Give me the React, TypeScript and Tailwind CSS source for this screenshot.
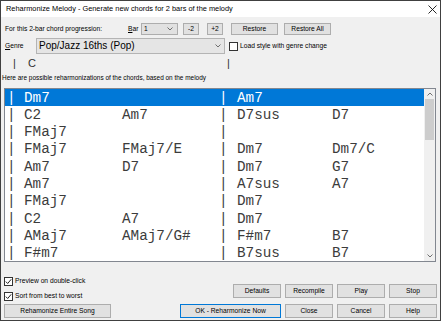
import React from "react";

const ui = "font-['Liberation_Sans',Arial,sans-serif] text-[6.7px] leading-none text-black";
const mono = "font-['Liberation_Mono','Courier_New',monospace] text-[14.3px] leading-none";

type Row = [string, string, string, string];

const rows: Row[] = [
  ["Dm7", "", "Am7", ""],
  ["C2", "Am7", "D7sus", "D7"],
  ["FMaj7", "", "", ""],
  ["FMaj7", "FMaj7/E", "Dm7", "Dm7/C"],
  ["Am7", "D7", "Dm7", "G7"],
  ["Am7", "", "A7sus", "A7"],
  ["FMaj7", "", "Dm7", ""],
  ["C2", "A7", "Dm7", ""],
  ["AMaj7", "AMaj7/G#", "F#m7", "B7"],
  ["F#m7", "", "B7sus", "B7"],
];

function Chevron({ up }: { up?: boolean }) {
  return (
    <svg width="6" height="4" viewBox="0 0 6 4">
      <path d={up ? "M0.5 3.5 L3 1 L5.5 3.5" : "M0.5 0.5 L3 3 L5.5 0.5"} stroke="#606060" strokeWidth="0.9" fill="none" />
    </svg>
  );
}

function Btn({ className, children }: { className: string; children: React.ReactNode }) {
  return (
    <div className={`flex items-center justify-center border bg-[#e1e1e1] ${ui} ${className}`}>
      {children}
    </div>
  );
}

function Check({ checked }: { checked?: boolean }) {
  return (
    <div className="w-[9px] h-[9px] border border-[#333] bg-white flex items-center justify-center shrink-0">
      {checked && (
        <svg width="7" height="7" viewBox="0 0 7 7">
          <path d="M0.8 3.6 L2.7 5.5 L6.2 1.3" stroke="#222" strokeWidth="1" fill="none" />
        </svg>
      )}
    </div>
  );
}

export default function App() {
  return (
    <div className="w-[441px] h-[321px] border border-[#404040] bg-[#f0f0f0] flex flex-col overflow-hidden">
      {/* title bar */}
      <div className="h-[16px] bg-white flex items-center justify-between pl-[5px] pr-[3px]">
        <span className="font-['Liberation_Sans',Arial,sans-serif] text-[7.4px] leading-none text-black">
          Reharmonize Melody - Generate new chords for 2 bars of the melody
        </span>
        <svg width="9" height="9" viewBox="0 0 9 9">
          <path d="M0.5 0.5 L8.5 8.5 M8.5 0.5 L0.5 8.5" stroke="#111" strokeWidth="0.9" />
        </svg>
      </div>

      {/* bar row */}
      <div className="mt-[6px] h-[12px] flex items-center pl-[4px]">
        <span className={`${ui} w-[123px]`}>For this 2-bar chord progression:</span>
        <span className={`${ui} w-[13px]`}>
          <u>B</u>ar
        </span>
        <div className="w-[37px] h-[12px] border border-[#adadad] bg-[#e1e1e1] flex items-center justify-between pl-[2px] pr-[4px]">
          <span className={ui}>1</span>
          <Chevron />
        </div>
        <Btn className="ml-[5px] w-[16px] h-[12px] border-[#adadad]">-2</Btn>
        <Btn className="ml-[8px] w-[16px] h-[12px] border-[#adadad]">+2</Btn>
        <Btn className="ml-[8px] w-[47px] h-[12px] border-[#adadad]">Restore</Btn>
        <Btn className="ml-[6px] w-[47px] h-[12px] border-[#adadad]">Restore All</Btn>
      </div>

      {/* genre row */}
      <div className="mt-[3px] h-[16px] flex items-center pl-[4px]">
        <span className={`${ui} w-[31px]`}>
          <u>G</u>enre
        </span>
        <div className="w-[189px] h-[16px] border border-[#b4b4b4] bg-[#e5e5e5] flex items-center justify-between pl-[2px] pr-[3px]">
          <span className="font-['Liberation_Sans',Arial,sans-serif] text-[10px] leading-none text-black">
            Pop/Jazz 16ths (Pop)
          </span>
          <Chevron />
        </div>
        <div className="ml-[4px]">
          <Check />
        </div>
        <span className={`${ui} ml-[2px]`}>Load style with genre change</span>
      </div>

      {/* current chords */}
      <div className="mt-[3px] h-[13px] flex items-center pl-[12px] font-['Liberation_Sans',Arial,sans-serif] text-[11px] leading-none text-[#333]">
        <span className="w-[15px]">|</span>
        <span className="w-[199px]">C</span>
        <span>|</span>
      </div>

      <div className={`mt-[3px] h-[10px] flex items-center pl-[1px] ${ui} text-[6.45px]`}>
        Here are possible reharmonizations of the chords, based on the melody
      </div>

      {/* list */}
      <div className="mt-[5px] ml-[3px] w-[432px] h-[174px] border border-[#828790] bg-white flex overflow-hidden">
        <div className="flex-1 flex flex-col overflow-hidden">
          {rows.map((r, i) => (
            <div
              key={i}
              className={`h-[17.3px] shrink-0 flex items-center pl-[2px] ${mono} ${
                i === 0 ? "bg-[#0078d7] text-white" : "text-[#3c3c3c]"
              }`}
            >
              <span className="w-[17px]">|</span>
              <span className="w-[98px]">{r[0]}</span>
              <span className="w-[97px]">{r[1]}</span>
              <span className="w-[18px]">|</span>
              <span className="w-[95px]">{r[2]}</span>
              <span>{r[3]}</span>
            </div>
          ))}
        </div>
        <div className="w-[11px] bg-[#f0f0f0] flex flex-col">
          <div className="h-[10px] flex items-center justify-center">
            <Chevron up />
          </div>
          <div className="mx-[1px] h-[41px] bg-[#cdcdcd]" />
          <div className="flex-1" />
          <div className="h-[10px] flex items-center justify-center">
            <Chevron />
          </div>
        </div>
      </div>

      {/* bottom */}
      <div className="mt-[15px] flex items-end justify-between pl-[3px] pr-[3px]">
        <div className="flex flex-col">
          <div className="h-[9px] flex items-center gap-[2px]">
            <Check checked />
            <span className={ui}>Preview on double-click</span>
          </div>
          <div className="mt-[6px] h-[9px] flex items-center gap-[2px]">
            <Check checked />
            <span className={ui}>Sort from best to worst</span>
          </div>
          <Btn className="mt-[3px] w-[107px] h-[14px] border-[#adadad]">Rehamonize Entire Song</Btn>
        </div>
        <div className="flex flex-col items-end gap-[6px]">
          <div className="flex gap-[4px]">
            <Btn className="w-[48px] h-[14px] border-[#adadad]">Defaults</Btn>
            <Btn className="w-[48px] h-[14px] border-[#adadad]">Recompile</Btn>
            <Btn className="w-[48px] h-[14px] border-[#adadad]">Play</Btn>
            <Btn className="w-[48px] h-[14px] border-[#adadad]">Stop</Btn>
          </div>
          <div className="flex gap-[4px]">
            <Btn className="w-[101px] h-[14px] border-[#0078d7]">OK - Reharmonize Now</Btn>
            <Btn className="w-[48px] h-[14px] border-[#adadad]">Close</Btn>
            <Btn className="w-[48px] h-[14px] border-[#adadad]">Cancel</Btn>
            <Btn className="w-[48px] h-[14px] border-[#adadad]">Help</Btn>
          </div>
        </div>
      </div>
    </div>
  );
}
